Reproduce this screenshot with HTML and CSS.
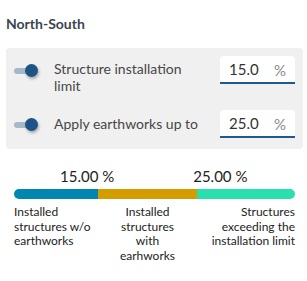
FILE: index.html
```html
<!DOCTYPE html>
<html>
<head>
<meta charset="utf-8">
<link rel="stylesheet" href="styles.css">
</head>
<body>
<div class="page">
  <h1 class="title">North-South</h1>
  <div class="panel">
    <div class="row row-first">
      <div class="toggle-wrap"><span class="toggle"></span></div>
      <div class="label">Structure installation limit</div>
      <div class="input"><span class="value">15.0</span><span class="unit">%</span></div>
    </div>
    <div class="row">
      <div class="toggle-wrap"><span class="toggle"></span></div>
      <div class="label">Apply earthworks up to</div>
      <div class="input"><span class="value">25.0</span><span class="unit">%</span></div>
    </div>
  </div>
  <div class="summary">
    <div class="pct-row">
      <span class="pct pct-a">15.00 %</span>
      <span class="pct pct-b">25.00 %</span>
    </div>
    <div class="bar">
      <span class="seg seg-a"></span>
      <span class="seg seg-b"></span>
      <span class="seg seg-c"></span>
    </div>
    <div class="legend">
      <div class="leg leg-a">Installed structures w/o earthworks</div>
      <div class="leg leg-b">Installed structures with earhworks</div>
      <div class="leg leg-c">Structures exceeding the installation limit</div>
    </div>
  </div>
</div>
</body>
</html>
```

FILE: styles.css
```css
* { box-sizing: border-box; }
html, body { margin: 0; padding: 0; background: #ffffff; }
body { font-family: Lato, "Open Sans", sans-serif; }
.page { padding: 15px 4px 0 6px; }
.title {
  margin: 0 0 16px 0;
  font-size: 14px;
  line-height: 17px;
  font-weight: 700;
  color: #3b4550;
}
.panel {
  background: #f0f0f0;
  border-radius: 4px;
  padding: 8px 8px 11px 8px;
  display: flex;
  flex-direction: column;
  gap: 16px;
}
.row {
  display: flex;
  align-items: flex-start;
}
.toggle-wrap {
  width: 24px;
  height: 28px;
  display: flex;
  align-items: center;
  flex: none;
}
.toggle {
  position: relative;
  display: block;
  width: 24px;
  height: 13px;
}
.toggle::before {
  content: "";
  position: absolute;
  left: 0;
  top: 4px;
  width: 21px;
  height: 6px;
  border-radius: 3px;
  background: #a6b9ca;
}
.toggle::after {
  content: "";
  position: absolute;
  right: 0;
  top: 0;
  width: 13px;
  height: 13px;
  border-radius: 50%;
  background: #1d5488;
  box-shadow: 1px 2px 3px rgba(0,0,0,0.3);
}
.label {
  flex: 1;
  margin: 4px 0 0 16px;
  font-size: 14px;
  line-height: 17px;
  color: #474747;
  padding-right: 12px;
}
.row + .row .label { margin-top: 5px; }
.input {
  flex: none;
  width: 75px;
  height: 28px;
  background: #ffffff;
  border-radius: 4px 4px 0 0;
  border-bottom: 2px solid #1f5a8e;
  display: flex;
  align-items: center;
  justify-content: space-between;
  padding: 0 9px 0 9px;
  font-size: 15px;
}
.value { color: #333333; }
.unit { color: #8a8a8a; padding-top: 2px; }
.summary {
  margin: 18px 8px 0 8px;
}
.pct-row {
  display: flex;
  font-size: 15px;
  line-height: 18px;
  color: #222222;
}
.pct-a { margin-left: 46px; }
.pct-b { margin-left: 79px; }
.bar {
  margin-top: 4px;
  height: 10px;
  border-radius: 5px;
  overflow: hidden;
  display: flex;
}
.seg { display: block; height: 100%; }
.seg-a { width: 84px; background: #0086b0; }
.seg-b { width: 99px; background: #d59c00; }
.seg-c { flex: 1; background: #28dfad; }
.legend {
  margin-top: 6px;
  display: grid;
  grid-template-columns: 100px 67px 1fr;
  font-size: 12px;
  line-height: 14.5px;
  color: #222222;
}
.leg-a { text-align: left; padding-right: 10px; }
.leg-b { text-align: center; }
.leg-c { text-align: right; padding-left: 18px; }
```
